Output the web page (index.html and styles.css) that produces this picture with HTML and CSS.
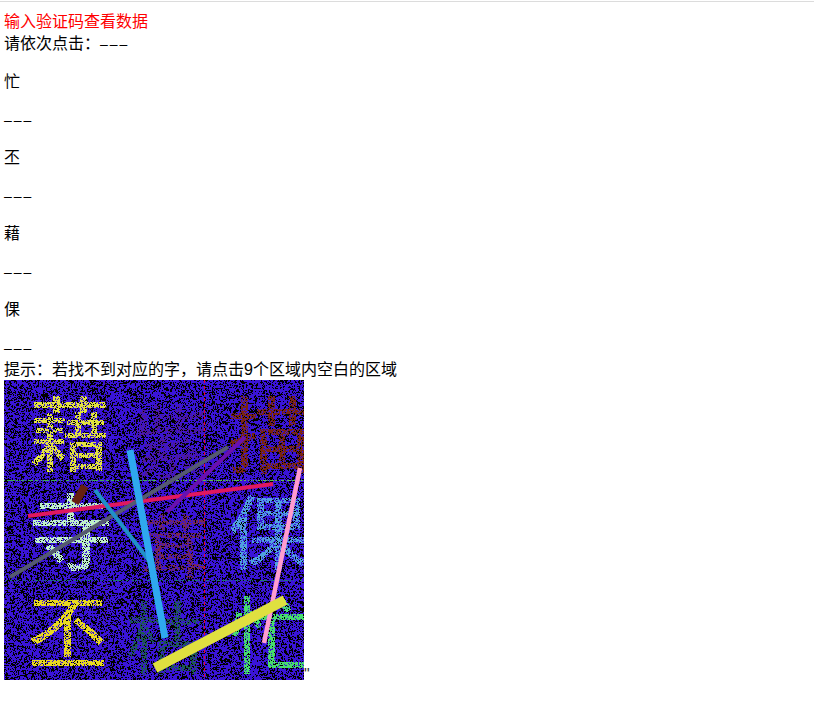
FILE: index.html
```html
<!DOCTYPE html>
<html lang="zh-CN">
<head>
<meta charset="UTF-8">
<title>输入验证码查看数据</title>
<link rel="stylesheet" href="styles.css">
</head>
<body>

<div class="top-line"></div>

<div class="verify-box">
    <div class="verify-title">输入验证码查看数据</div>
    <div class="verify-words">
        请依次点击：<span class="dash">–––</span>
        <p>忙</p>
        <p class="dash">–––</p>
        <p>丕</p>
        <p class="dash">–––</p>
        <p>藉</p>
        <p class="dash">–––</p>
        <p>倮</p>
        <p class="dash">–––</p>
    </div>
    <div class="verify-tip">提示：若找不到对应的字，请点击9个区域内空白的区域</div>
    <div class="captcha-row"><canvas id="captcha" width="300" height="300"></canvas><span class="stray">"</span></div>
</div>

<script src="captcha.js"></script>
</body>
</html>
```

FILE: styles.css
```css
body {
    margin: 0;
    padding: 0;
    background-color: #fff;
    color: #000;
    font-family: "Liberation Sans", "Noto Sans CJK SC", sans-serif;
    font-size: 16px;
    line-height: 22px;
}

.top-line {
    height: 1px;
    margin-top: 1px;
    background-color: #dcdcdc;
}

.verify-box {
    padding: 9px 4px 0;
}

.verify-title {
    color: #f00;
}

.verify-words p {
    margin: 16px 0;
}

.verify-words p:last-child {
    margin-bottom: 0;
}

.dash {
    font-family: "Liberation Sans", sans-serif;
    font-size: 14px;
    letter-spacing: 2px;
}

.verify-tip {
    height: 21px;
}

.captcha-row {
    height: 305px;
}

#captcha {
    vertical-align: baseline;
}

.stray {
    color: #333;
}
```

FILE: captcha.js
```js
// captcha picture: noise, characters, then the lines over them
const canvas = document.getElementById('captcha');
const ctx = canvas.getContext('2d');
const size = 300;

// fixed seed so every load gives the same picture
let seed = 20240611;
function rand() {
    seed = (seed * 1664525 + 1013904223) >>> 0;
    return ((seed >>> 8) & 0xffff) / 65536;
}

// keep = how much of a stroke survives the noise
const chars = [
    { text: '藉', x: 26, y: 84, size: 80, keep: 0.68, color: [226, 226, 64] },
    { text: '描', x: 224, y: 86, size: 82, keep: 0.62, color: [122, 36, 16] },
    { text: '紫', x: 128, y: 92, size: 80, keep: 0.42, color: [80, 24, 150] },
    { text: '寺', x: 25, y: 184, size: 84, keep: 0.72, color: [190, 240, 200] },
    { text: '茸', x: 136, y: 192, size: 68, keep: 0.5, color: [122, 40, 80] },
    { text: '倮', x: 224, y: 182, size: 80, keep: 0.62, color: [80, 160, 224] },
    { text: '丕', x: 24, y: 282, size: 80, keep: 0.75, color: [232, 216, 32] },
    { text: '枯', x: 122, y: 288, size: 78, keep: 0.5, color: [28, 90, 80] },
    { text: '忙', x: 226, y: 286, size: 82, keep: 0.7, color: [70, 220, 110] }
];

// one pass per character, so each pixel knows which one it belongs to
const owner = new Array(size * size).fill(null);
chars.forEach(c => {
    ctx.clearRect(0, 0, size, size);
    ctx.font = c.size + 'px "Noto Sans CJK SC", sans-serif';
    ctx.fillStyle = '#000';
    ctx.strokeStyle = '#000';
    ctx.lineWidth = 0.6;
    ctx.fillText(c.text, c.x, c.y);
    ctx.strokeText(c.text, c.x, c.y);
    const data = ctx.getImageData(0, 0, size, size).data;
    for (let i = 0; i < owner.length; i++) {
        if (data[i * 4 + 3] > 90) owner[i] = c;
    }
});

const image = ctx.createImageData(size, size);
let above = new Array(size).fill(false);
for (let y = 0; y < size; y++) {
    let left = false;
    for (let x = 0; x < size; x++) {
        const i = y * size + x;
        // black pixels clump a little with their neighbours
        let chance = 0.28;
        if (left) chance += 0.12;
        if (above[x]) chance += 0.12;
        const dark = rand() < chance;
        left = dark;
        above[x] = dark;

        let col = dark ? [0, 0, 0] : [58, 20, 216];
        if (owner[i] && rand() < owner[i].keep) col = owner[i].color;

        // dotted guide lines of the 3x3 grid
        if (y === 100 && rand() < 0.5) col = x < 150 ? [60, 170, 90] : [90, 190, 80];
        if (y === 200 && rand() < 0.5) col = [30, 120, 120];
        if (x === 200 && y % 6 < 3) col = [240, 0, 40];
        if (x === 101 && rand() < 0.5 && y % 3 === 0) col = [80, 20, 60];

        image.data.set([col[0], col[1], col[2], 255], i * 4);
    }
}
ctx.putImageData(image, 0, 0);

const lines = [
    { from: [24, 136], to: [269, 104], width: 4, color: '#e0185f' },
    { from: [6, 197], to: [224, 67], width: 4, color: '#555a70' },
    { from: [163, 132], to: [241, 57], width: 4, color: '#6a10b0' },
    { from: [91, 110], to: [146, 182], width: 4, color: '#2090c8' },
    { from: [81, 106], to: [71, 123], width: 8, color: '#66200f' },
    { from: [126, 70], to: [161, 258], width: 7, color: '#2fa8ee' },
    { from: [296, 88], to: [260, 263], width: 4.5, color: '#ff9ccf' },
    { from: [151, 288], to: [281, 220], width: 10, color: '#dfe040' }
];
lines.forEach(l => {
    ctx.beginPath();
    ctx.moveTo(l.from[0], l.from[1]);
    ctx.lineTo(l.to[0], l.to[1]);
    ctx.lineWidth = l.width;
    ctx.strokeStyle = l.color;
    ctx.stroke();
});
```
